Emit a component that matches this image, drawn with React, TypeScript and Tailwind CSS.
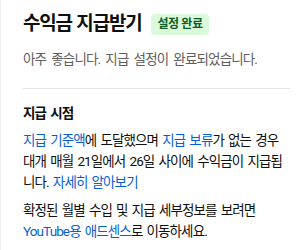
import React from 'react';

const ko = "font-['Roboto','Noto_Sans_CJK_KR',sans-serif]";

function Link({ children }: { children: React.ReactNode }) {
  return <a className="text-[#065fd4]">{children}</a>;
}

export default function App() {
  return (
    <div className={`${ko} h-[250px] w-[298px] bg-white border-l border-[#efefef] pl-[22px] pr-[8px] pt-[10px] text-[#0f0f0f]`}>
      <div className="flex h-[28px] items-center gap-[10px]">
        <h1 className="text-[19px] font-bold tracking-[-1.2px] [word-spacing:1px]">수익금 지급받기</h1>
        <span className="flex h-[21px] items-center rounded-[4px] bg-[#dbfadc] px-[6px] text-[12px] font-bold tracking-[-0.4px] text-[#0b5d26]">
          설정 완료
        </span>
      </div>

      <p className="mt-[11px] text-[13.5px] leading-[21px] tracking-[-0.85px] [word-spacing:2.6px] text-[#606060]">
        아주 좋습니다. 지급 설정이 완료되었습니다.
      </p>

      <div className="mt-[18px] h-px bg-[#e5e5e5]" />

      <div className="mt-[14px] text-[13.5px] leading-[21px] tracking-[-0.9px] [word-spacing:1.7px]">
        <h2 className="font-bold">지급 시점</h2>
        <p className="mt-[6px]">
          <Link>지급 기준액</Link>에 도달했으며 <Link>지급 보류</Link>가 없는 경우 대개 매월 21일에서 26일 사이에 수익금이 지급됩니다.{' '}
          <Link>자세히 알아보기</Link>
        </p>
        <p className="mt-[7px]">
          확정된 월별 수입 및 지급 세부정보를 보려면 <Link>YouTube용 애드센스</Link>로 이동하세요.
        </p>
      </div>
    </div>
  );
}
